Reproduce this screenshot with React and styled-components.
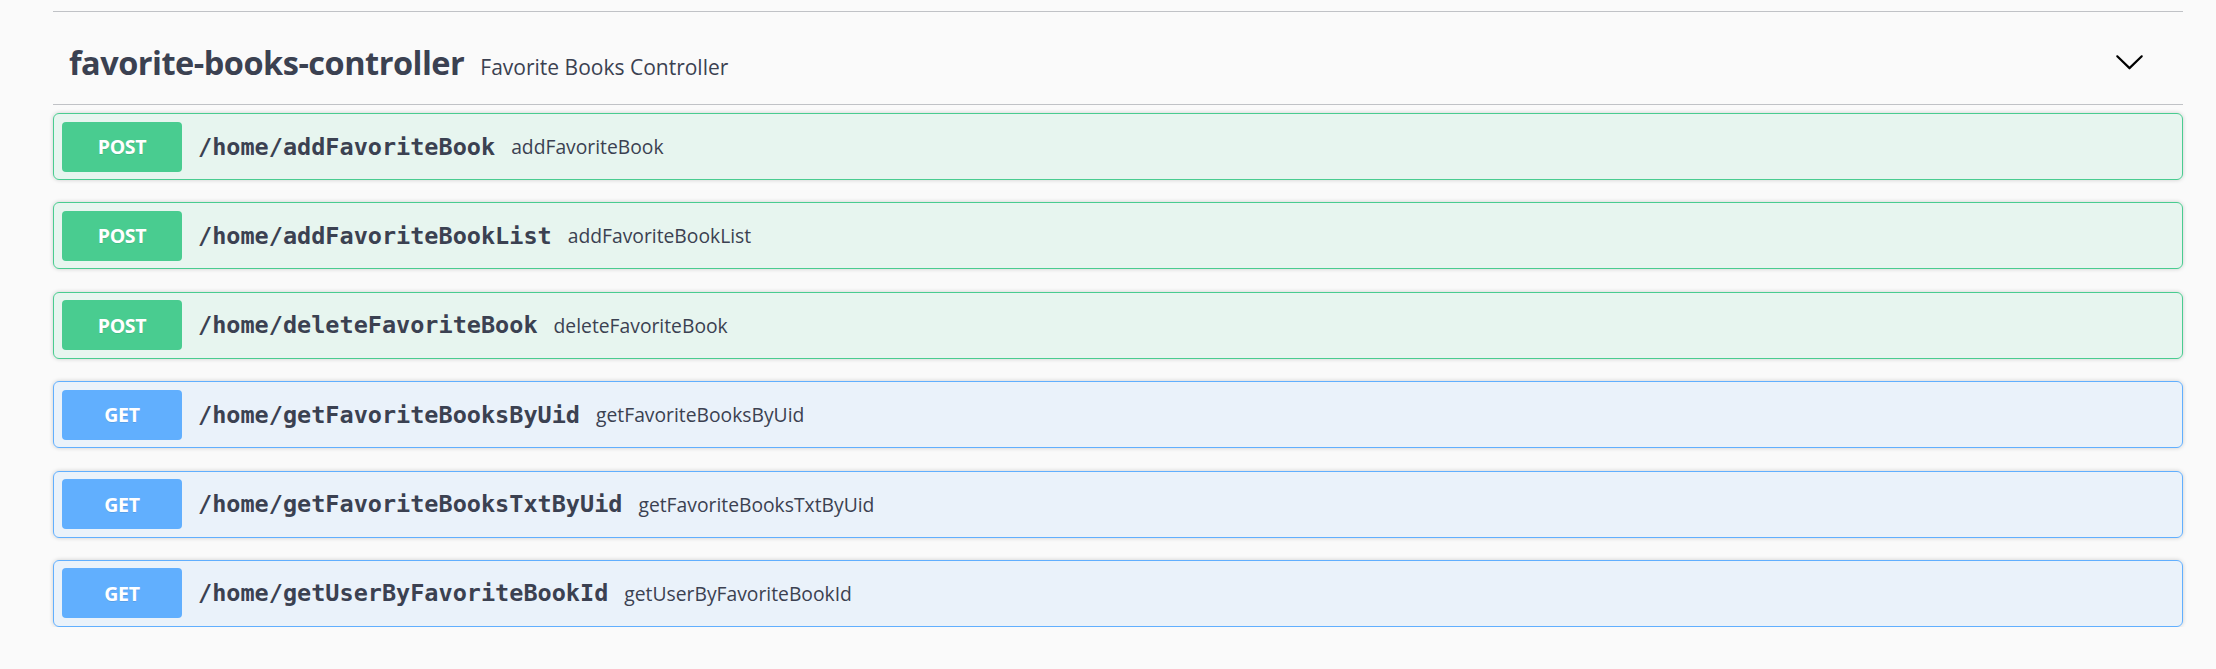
import React from "react";
import styled, { createGlobalStyle } from "styled-components";

const GlobalStyle = createGlobalStyle`
  html, body {
    margin: 0;
    padding: 0;
    background: #fafafa;
  }
  * {
    box-sizing: border-box;
  }
`;

const Wrapper = styled.div`
  padding: 11px 33px 0 53px;
  font-family: "Open Sans", sans-serif;
  color: #3b4151;
`;

const TagHeader = styled.div`
  display: flex;
  align-items: center;
  height: 94px;
  padding: 0 38px 0 16px;
  border-top: 1px solid rgba(59, 65, 81, 0.3);
  border-bottom: 1px solid rgba(59, 65, 81, 0.3);
`;

const TagTitle = styled.div`
  flex: 1;
  display: flex;
  align-items: baseline;
  padding-top: 8px;
`;

const TagName = styled.span`
  font-size: 32.5px;
  font-weight: 700;
  letter-spacing: -0.5px;
  color: #3b4151;
`;

const TagDescription = styled.small`
  margin-left: 16px;
  font-size: 21px;
  color: #3b4151;
`;

const ExpandButton = styled.button`
  display: flex;
  align-items: center;
  border: none;
  background: none;
  padding: 0;
  margin-top: 6px;
  cursor: pointer;
`;

const OperationList = styled.div`
  display: flex;
  flex-direction: column;
  gap: 22.4px;
  margin-top: 8px;
`;

const theme = {
  post: { color: "#49cc90", bg: "rgba(73, 204, 144, 0.1)" },
  get: { color: "#61affe", bg: "rgba(97, 175, 254, 0.1)" },
};

const Operation = styled.div`
  display: flex;
  align-items: center;
  height: 67px;
  padding: 0 8px;
  border: 1px solid ${(p) => theme[p.$method].color};
  background: ${(p) => theme[p.$method].bg};
  border-radius: 6px;
  box-shadow: 0 0 4px rgba(0, 0, 0, 0.19);
`;

const MethodBadge = styled.span`
  display: flex;
  align-items: center;
  justify-content: center;
  width: 120px;
  height: 50px;
  border-radius: 4px;
  background: ${(p) => theme[p.$method].color};
  color: #fff;
  font-family: "Open Sans", sans-serif;
  font-weight: 700;
  font-size: 19.5px;
  letter-spacing: -0.3px;
  text-shadow: 0 1px 0 rgba(0, 0, 0, 0.1);
`;

const Path = styled.span`
  margin-left: 16px;
  font-family: "DejaVu Sans Mono", "Liberation Mono", monospace;
  font-size: 23.5px;
  font-weight: 600;
  color: #3b4151;
`;

const Summary = styled.span`
  margin-left: 16px;
  font-size: 19.3px;
  color: #3b4151;
`;

const operations = [
  { method: "post", path: "/home/addFavoriteBook", summary: "addFavoriteBook" },
  { method: "post", path: "/home/addFavoriteBookList", summary: "addFavoriteBookList" },
  { method: "post", path: "/home/deleteFavoriteBook", summary: "deleteFavoriteBook" },
  { method: "get", path: "/home/getFavoriteBooksByUid", summary: "getFavoriteBooksByUid" },
  { method: "get", path: "/home/getFavoriteBooksTxtByUid", summary: "getFavoriteBooksTxtByUid" },
  { method: "get", path: "/home/getUserByFavoriteBookId", summary: "getUserByFavoriteBookId" },
];

const Arrow = () => (
  <svg width="31" height="31" viewBox="0 0 20 20" fill="#000">
    <path d="M17.418 6.109c.272-.268.709-.268.979 0s.271.701 0 .969l-7.908 7.83c-.27.268-.707.268-.979 0l-7.908-7.83c-.27-.268-.27-.701 0-.969.271-.268.709-.268.979 0L10 13.25l7.418-7.141z" />
  </svg>
);

export default function App() {
  return (
    <>
      <GlobalStyle />
      <Wrapper>
        <TagHeader>
          <TagTitle>
            <TagName>favorite-books-controller</TagName>
            <TagDescription>Favorite Books Controller</TagDescription>
          </TagTitle>
          <ExpandButton aria-label="collapse">
            <Arrow />
          </ExpandButton>
        </TagHeader>
        <OperationList>
          {operations.map((op) => (
            <Operation key={op.path} $method={op.method}>
              <MethodBadge $method={op.method}>{op.method.toUpperCase()}</MethodBadge>
              <Path>{op.path}</Path>
              <Summary>{op.summary}</Summary>
            </Operation>
          ))}
        </OperationList>
      </Wrapper>
    </>
  );
}
